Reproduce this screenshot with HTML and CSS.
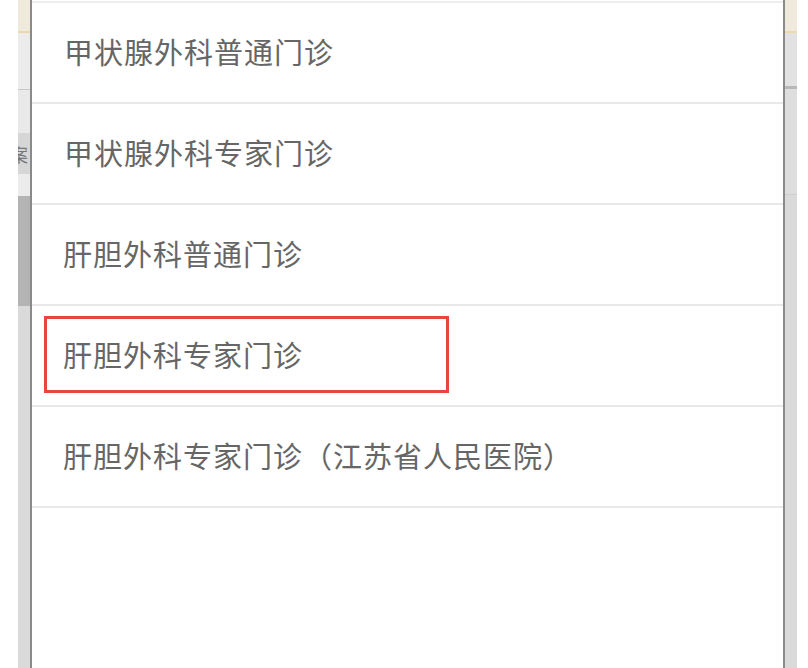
FILE: index.html
```html
<!DOCTYPE html>
<html lang="zh-CN">
<head>
  <meta charset="UTF-8">
  <title>科室选择</title>
  <link rel="stylesheet" href="styles.css">
</head>
<body>
  <div class="page">
    <div class="gap"></div>
    <div class="backdrop">
      <div class="bd-head"></div>
      <div class="bd-cell"></div>
      <div class="bd-cell plain"></div>
      <div class="bd-cell dark"><span>案</span></div>
      <div class="bd-cell light"></div>
      <div class="bd-scroll"></div>
      <div class="bd-rest"></div>
    </div>

    <div class="modal">
      <ul class="dept-list">
        <li class="dept">甲状腺外科普通门诊</li>
        <li class="dept">甲状腺外科专家门诊</li>
        <li class="dept">肝胆外科普通门诊</li>
        <li class="dept marked">肝胆外科专家门诊<span class="mark"></span></li>
        <li class="dept">肝胆外科专家门诊（江苏省人民医院）</li>
      </ul>
    </div>

    <div class="backdrop right">
      <div class="bd-head"></div>
      <div class="bd-cell tall"></div>
      <div class="bd-cell mid"></div>
      <div class="bd-rest"></div>
    </div>
    <div class="gap"></div>
  </div>
</body>
</html>
```

FILE: styles.css
```css
* {
  margin: 0;
  padding: 0;
  box-sizing: border-box;
}

body {
  background: #fff;
  font-family: "Noto Sans CJK SC", "Noto Sans", sans-serif;
  width: 808px;
  height: 668px;
  overflow: hidden;
}

.page {
  display: grid;
  grid-template-columns: 18px 12px 1fr 12px 11px;
  height: 668px;
}

.gap {
  background: #fff;
}

/* page behind the dialog */
.backdrop {
  display: flex;
  flex-direction: column;
  background: #dcdcdc;
}

.bd-head {
  flex: none;
  height: 33px;
  background: #efeadb;
  border-bottom: 2px solid #ecd9ad;
}

.bd-cell {
  flex: none;
  height: 57px;
  background: #ececec;
  border-bottom: 1px solid #c8c8c8;
}

.bd-cell.plain {
  height: 43px;
  background: #e9e9e9;
  border-bottom: none;
}

.bd-cell.dark {
  height: 41px;
  background: #d6d6d6;
  border-bottom: none;
  display: flex;
  align-items: center;
  overflow: hidden;
}

.bd-cell.dark span {
  font-size: 18px;
  color: #777;
  margin-left: -8px;
}

.bd-cell.light {
  height: 22px;
  background: #ececec;
  border-bottom: none;
}

.bd-scroll {
  flex: none;
  height: 110px;
  background: #b4b4b4;
}

.bd-rest {
  flex: 1;
  background: #dadada;
}

.backdrop.right .bd-cell.tall {
  height: 56px;
  background: #e2e2e2;
  border-bottom: 3px solid #b8b8b8;
}

.backdrop.right .bd-cell.mid {
  height: 106px;
  background: #dedede;
  border-bottom: 1px solid #cfcfcf;
}

/* dialog */
.modal {
  background: #fff;
  border-left: 2px solid #8a8a8a;
  border-right: 2px solid #8a8a8a;
  padding-top: 1px;
}

.dept-list {
  list-style: none;
  border-top: 2px solid #eeeeee;
}

.dept {
  position: relative;
  height: 101px;
  border-bottom: 2px solid #e8e8e8;
  display: flex;
  align-items: center;
  padding-left: 32px;
  padding-bottom: 4px;
  font-size: 29px;
  color: #666;
  letter-spacing: 1px;
}

.dept:nth-child(n+3) {
  padding-left: 31px;
}

/* annotation box over the chosen row */
.mark {
  position: absolute;
  left: 12px;
  top: 10px;
  width: 405px;
  height: 77px;
  border: 3px solid #e5473f;
}
```
